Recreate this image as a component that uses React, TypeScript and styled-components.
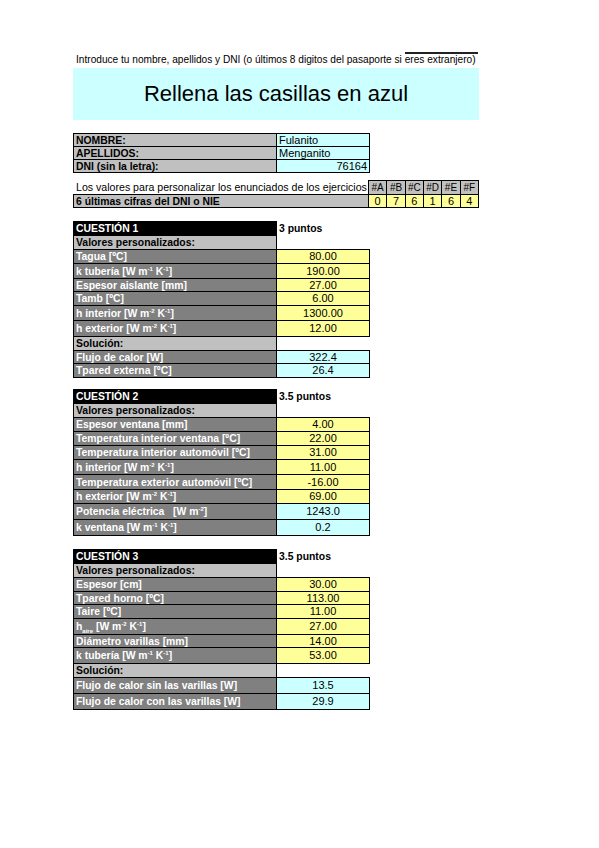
import React from "react";
import styled, { createGlobalStyle } from "styled-components";

const Global = createGlobalStyle`
  html, body { margin: 0; padding: 0; background: #fff; }
  body { font-family: "Liberation Sans", Arial, sans-serif; color: #000; }
`;

const Page = styled.div`
  width: 599px;
  min-height: 848px;
  padding: 52px 0 0 73px;
  box-sizing: border-box;
`;

const Sheet = styled.div`
  width: 406px;
  display: flex;
  flex-direction: column;
  align-items: flex-start;
`;

const IntroLine = styled.div`
  height: 16px;
  font-size: 10.15px;
  line-height: 16px;
  padding-left: 3px;
  white-space: nowrap;
`;

const Overlined = styled.span`
  border-top: 2px solid #222;
  padding-right: 2px;
  display: inline-block;
  line-height: 12px;
`;

const Banner = styled.div`
  align-self: stretch;
  height: 52px;
  background: #ccffff;
  display: flex;
  align-items: center;
  justify-content: center;
  font-size: 22px;
`;

const Table = styled.table<{ $mt: number; $w: number }>`
  border-collapse: collapse;
  margin-top: ${(p) => p.$mt}px;
  width: ${(p) => p.$w}px;
  font-size: 11px;
  table-layout: fixed;
`;

const Row = styled.tr<{ $h: number }>`
  height: ${(p) => p.$h}px;
`;

type Tone = "light" | "dark" | "black" | "cyan" | "yellow" | "none";

const bg: Record<Tone, string> = {
  light: "#c0c0c0",
  dark: "#808080",
  black: "#000",
  cyan: "#ccffff",
  yellow: "#ffff99",
  none: "transparent",
};

const Cell = styled.td<{ $tone: Tone; $w: number; $align?: string; $bold?: boolean; $border?: boolean; $small?: boolean }>`
  width: ${(p) => p.$w}px;
  padding: 0 ${(p) => (p.$small ? 0 : 2)}px;
  box-sizing: border-box;
  background: ${(p) => bg[p.$tone]};
  color: ${(p) => (p.$tone === "dark" || p.$tone === "black" ? "#fff" : "#000")};
  border: ${(p) => (p.$border === false ? "none" : "1px solid #000")};
  text-align: ${(p) => p.$align || "left"};
  font-weight: ${(p) => (p.$bold ? "bold" : "normal")};
  font-size: ${(p) => (p.$small ? "10px" : p.$bold ? "10.4px" : "11px")};
  line-height: 11px;
  white-space: nowrap;
  overflow: hidden;
  vertical-align: middle;
  sup, sub { font-size: 6px; line-height: 0; }
`;

const ClipRow = styled.div`
  margin-top: 7px;
  display: flex;
  height: 14px;
`;

const ClipText = styled.div`
  width: 295px;
  padding-left: 3px;
  box-sizing: border-box;
  font-size: 10.6px;
  line-height: 14px;
  white-space: nowrap;
  overflow: hidden;
`;

const Sup = styled.sup``;
const Sub = styled.sub``;

type QRow = { label: React.ReactNode; value?: string; kind: "input" | "output" | "section"; h: number };

const wm1 = (
  <>
    [W m<Sup>-1</Sup> K<Sup>-1</Sup>]
  </>
);
const wm2 = (
  <>
    [W m<Sup>-2</Sup> K<Sup>-1</Sup>]
  </>
);

const q1: QRow[] = [
  { label: "Tagua [ºC]", value: "80.00", kind: "input", h: 14 },
  { label: <>k tubería {wm1}</>, value: "190.00", kind: "input", h: 15 },
  { label: "Espesor aislante [mm]", value: "27.00", kind: "input", h: 13 },
  { label: "Tamb [ºC]", value: "6.00", kind: "input", h: 14 },
  { label: <>h interior {wm2}</>, value: "1300.00", kind: "input", h: 15 },
  { label: <>h exterior {wm2}</>, value: "12.00", kind: "input", h: 16 },
  { label: "Solución:", kind: "section", h: 14 },
  { label: "Flujo de calor [W]", value: "322.4", kind: "output", h: 13 },
  { label: "Tpared externa [ºC]", value: "26.4", kind: "output", h: 14 },
];

const q2: QRow[] = [
  { label: "Espesor ventana [mm]", value: "4.00", kind: "input", h: 14 },
  { label: "Temperatura interior ventana [ºC]", value: "22.00", kind: "input", h: 14 },
  { label: "Temperatura interior automóvil [ºC]", value: "31.00", kind: "input", h: 14 },
  { label: <>h interior {wm2}</>, value: "11.00", kind: "input", h: 15 },
  { label: "Temperatura exterior automóvil [ºC]", value: "-16.00", kind: "input", h: 15 },
  { label: <>h exterior {wm2}</>, value: "69.00", kind: "input", h: 14 },
  {
    label: (
      <>
        Potencia eléctrica &nbsp;&nbsp;[W m<Sup>-2</Sup>]
      </>
    ),
    value: "1243.0",
    kind: "output",
    h: 16,
  },
  { label: <>k ventana {wm1}</>, value: "0.2", kind: "output", h: 16 },
];

const q3: QRow[] = [
  { label: "Espesor [cm]", value: "30.00", kind: "input", h: 14 },
  { label: "Tpared horno [ºC]", value: "113.00", kind: "input", h: 13 },
  { label: "Taire [ºC]", value: "11.00", kind: "input", h: 14 },
  {
    label: (
      <>
        h<Sub>aire</Sub> {wm2}
      </>
    ),
    value: "27.00",
    kind: "input",
    h: 16,
  },
  { label: "Diámetro varillas [mm]", value: "14.00", kind: "input", h: 13 },
  { label: <>k tubería {wm1}</>, value: "53.00", kind: "input", h: 16 },
  { label: "Solución:", kind: "section", h: 14 },
  { label: "Flujo de calor sin las varillas [W]", value: "13.5", kind: "output", h: 16 },
  { label: "Flujo de calor con las varillas [W]", value: "29.9", kind: "output", h: 16 },
];

function Question({ n, points, rows, mt }: { n: number; points: string; rows: QRow[]; mt: number }) {
  return (
    <Table $mt={mt} $w={296}>
      <tbody>
        <Row $h={14}>
          <Cell $tone="black" $w={203} $bold>
            CUESTIÓN {n}
          </Cell>
          <Cell $tone="none" $w={93} $bold $border={false}>
            {points}
          </Cell>
        </Row>
        <Row $h={14}>
          <Cell $tone="light" $w={203} $bold>
            Valores personalizados:
          </Cell>
          <Cell $tone="none" $w={93} $border={false} />
        </Row>
        {rows.map((r, i) =>
          r.kind === "section" ? (
            <Row key={i} $h={r.h}>
              <Cell $tone="light" $w={203} $bold>
                {r.label}
              </Cell>
              <Cell $tone="none" $w={93} $border={false} />
            </Row>
          ) : (
            <Row key={i} $h={r.h}>
              <Cell $tone="dark" $w={203} $bold>
                {r.label}
              </Cell>
              <Cell $tone={r.kind === "input" ? "yellow" : "cyan"} $w={93} $align="center">
                {r.value}
              </Cell>
            </Row>
          )
        )}
      </tbody>
    </Table>
  );
}

const letters = ["#A", "#B", "#C", "#D", "#E", "#F"];
const digits = ["0", "7", "6", "1", "6", "4"];

export default function App() {
  return (
    <>
      <Global />
      <Page>
        <Sheet>
          <IntroLine>
            Introduce tu nombre, apellidos y DNI (o últimos 8 digitos del pasaporte si{" "}
            <Overlined>eres extranjero)</Overlined>
          </IntroLine>
          <Banner>Rellena las casillas en azul</Banner>

          <Table $mt={13} $w={296}>
            <tbody>
              <Row $h={13}>
                <Cell $tone="light" $w={203} $bold>
                  NOMBRE:
                </Cell>
                <Cell $tone="cyan" $w={93}>
                  Fulanito
                </Cell>
              </Row>
              <Row $h={13}>
                <Cell $tone="light" $w={203} $bold>
                  APELLIDOS:
                </Cell>
                <Cell $tone="cyan" $w={93}>
                  Menganito
                </Cell>
              </Row>
              <Row $h={13}>
                <Cell $tone="light" $w={203} $bold>
                  DNI (sin la letra):
                </Cell>
                <Cell $tone="cyan" $w={93} $align="right">
                  76164
                </Cell>
              </Row>
            </tbody>
          </Table>

          <ClipRow>
            <ClipText>Los valores para personalizar los enunciados de los ejercicios son:</ClipText>
            <Table $mt={0} $w={110}>
              <tbody>
                <Row $h={14}>
                  {letters.map((l) => (
                    <Cell key={l} $tone="light" $w={18.33} $align="center" $small>
                      {l}
                    </Cell>
                  ))}
                </Row>
              </tbody>
            </Table>
          </ClipRow>
          <Table $mt={0} $w={405}>
            <tbody>
              <Row $h={13}>
                <Cell $tone="light" $w={295} $bold>
                  6 últimas cifras del DNI o NIE
                </Cell>
                {digits.map((d, i) => (
                  <Cell key={i} $tone="yellow" $w={18.33} $align="center">
                    {d}
                  </Cell>
                ))}
              </Row>
            </tbody>
          </Table>

          <Question n={1} points="3 puntos" rows={q1} mt={13} />
          <Question n={2} points="3.5 puntos" rows={q2} mt={11} />
          <Question n={3} points="3.5 puntos" rows={q3} mt={13} />
        </Sheet>
      </Page>
    </>
  );
}
